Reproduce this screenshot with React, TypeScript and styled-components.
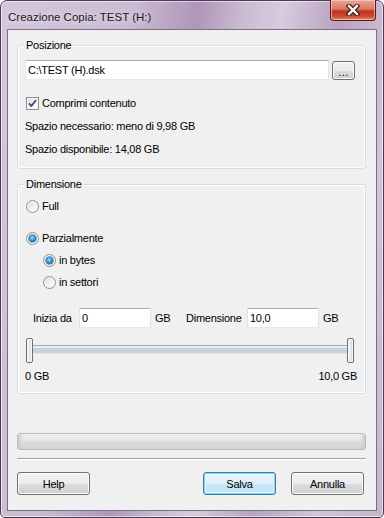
import React from "react";
import styled, { createGlobalStyle, css } from "styled-components";

const GlobalStyle = createGlobalStyle`
  html, body { margin: 0; padding: 0; background: #ffffff; }
  body {
    font-family: "Liberation Sans", Arial, sans-serif;
    font-size: 11px;
    letter-spacing: -0.25px;
    color: #000;
  }
  * { box-sizing: border-box; }
`;

const Window = styled.div`
  width: 384px;
  height: 518px;
  border: 1px solid #4b3d52;
  border-radius: 7px 7px 5px 5px;
  padding: 0 6px 6px 6px;
  display: flex;
  flex-direction: column;
  background: linear-gradient(
    100deg,
    #d4c7dc 0%,
    #cbbad3 28%,
    #b096b8 42%,
    #cbbbd2 52%,
    #d7cbde 60%,
    #b9a2c0 72%,
    #d2c4d9 86%,
    #c7b5ce 100%
  );
  box-shadow: inset 0 0 0 1px rgba(255, 255, 255, 0.55);
`;

const TitleBar = styled.div`
  height: 28px;
  flex: none;
  display: flex;
  align-items: flex-start;
  justify-content: space-between;
`;

const Title = styled.div`
  margin: 9px 0 0 1px;
  font-family: "Segoe UI", "Liberation Sans", Arial, sans-serif;
  font-size: 11.5px;
  letter-spacing: 0;
  line-height: 14px;
  color: #1a1a1a;
  text-shadow: 0 0 6px rgba(255, 255, 255, 0.9);
`;

const CloseButton = styled.div`
  width: 46px;
  height: 21px;
  margin: -1px 1px 0 0;
  border: 1px solid #5a1c16;
  border-top: none;
  border-radius: 0 0 4px 4px;
  display: flex;
  align-items: center;
  justify-content: center;
  background: linear-gradient(
    to bottom,
    #eaa797 0%,
    #d97a66 45%,
    #c4321b 55%,
    #c94831 80%,
    #e28a6c 100%
  );
  box-shadow: inset 0 0 0 1px rgba(255, 220, 210, 0.55);
`;

const Client = styled.div`
  flex: 1;
  background: #f0f0f0;
  border: 1px solid #7d6d85;
  display: flex;
  flex-direction: column;
  padding: 0 10px 0 9px;
`;

const Group = styled.div<{ $top: number; $pad: string }>`
  position: relative;
  margin-top: ${(p) => p.$top}px;
  border: 1px solid #d5dfe5;
  border-radius: 3px;
  box-shadow: inset 0 0 0 1px #ffffff;
  padding: ${(p) => p.$pad};
  display: flex;
  flex-direction: column;
`;

const Caption = styled.span`
  position: absolute;
  top: -7px;
  left: 6px;
  padding: 0 2px;
  line-height: 13px;
  background: #f0f0f0;
`;

const PathRow = styled.div`
  display: flex;
  align-items: center;
  gap: 3px;
  height: 20px;
`;

const TextField = styled.input<{ $w: number }>`
  width: ${(p) => p.$w}px;
  height: 20px;
  margin: 0;
  padding: 0 0 0 2px;
  border: 1px solid;
  border-color: #abadb3 #e2e3ea #e3e9ef #e2e3ea;
  background: #ffffff;
  font: inherit;
  letter-spacing: inherit;
  color: #000;
  outline: none;
`;

const buttonFace = css`
  border: 1px solid #707070;
  border-radius: 3px;
  background: linear-gradient(
    to bottom,
    #f2f2f2 0%,
    #ebebeb 50%,
    #dddddd 51%,
    #cfcfcf 100%
  );
  box-shadow: inset 0 0 0 1px #fbfbfb;
  font: inherit;
  color: #000;
  padding: 0;
  display: flex;
  align-items: center;
  justify-content: center;
`;

const BrowseButton = styled.div`
  ${buttonFace}
  width: 23px;
  height: 19px;
  line-height: 10px;
  padding-top: 3px;
  letter-spacing: 0.5px;
`;

const OptionRow = styled.div<{ $top: number; $indent?: number }>`
  display: flex;
  align-items: center;
  gap: 3px;
  height: 13px;
  margin-top: ${(p) => p.$top}px;
  margin-left: ${(p) => p.$indent ?? 0}px;
  line-height: 13px;
`;

const CheckBox = styled.span`
  width: 13px;
  height: 13px;
  flex: none;
  margin-left: 1px;
  border: 1px solid #8e8f8f;
  background: linear-gradient(135deg, #dcdcdc 0%, #f6f6f6 60%, #ffffff 100%);
  box-shadow: inset 0 0 0 1px #f4f4f4;
  display: flex;
  align-items: center;
  justify-content: center;
`;

const Radio = styled.span<{ $on?: boolean }>`
  width: 13px;
  height: 13px;
  flex: none;
  border-radius: 50%;
  border: 1px solid #8e8f8f;
  background: linear-gradient(135deg, #d9d9d9 0%, #f2f2f2 55%, #ffffff 100%);
  box-shadow: inset 0 0 0 1px #f7f7f7;
  display: flex;
  align-items: center;
  justify-content: center;
  &::after {
    content: "";
    display: ${(p) => (p.$on ? "block" : "none")};
    width: 7px;
    height: 7px;
    border-radius: 50%;
    background: radial-gradient(
      circle at 45% 40%,
      #9be3fb 0%,
      #2aa3e0 40%,
      #0f5f9e 80%,
      #0b4a80 100%
    );
    box-shadow: 0 0 0 0.5px #174d7b;
  }
`;

const InfoText = styled.div<{ $top: number }>`
  margin-top: ${(p) => p.$top}px;
  line-height: 13px;
`;

const FieldsRow = styled.div`
  margin-top: 19px;
  height: 20px;
  padding-left: 8px;
  display: grid;
  grid-template-columns: 46px 72px 35px 61px 72px auto;
  align-items: center;
`;

const Unit = styled.span`
  padding-left: 4px;
`;

const Slider = styled.div`
  position: relative;
  margin: 10px 0 0 1px;
  width: 328px;
  height: 25px;
`;

const Track = styled.div`
  margin: 7px 3px 0 3px;
  height: 9px;
  background: linear-gradient(
    to bottom,
    #a9a9a9 0px,
    #a9a9a9 1px,
    #eaeef2 1px,
    #eaeef2 3px,
    #c5d3df 3px,
    #c5d3df 8px,
    #e3e8ec 8px,
    #e3e8ec 9px
  );
`;

const Thumb = styled.div<{ $side: "left" | "right" }>`
  position: absolute;
  top: 0;
  ${(p) => p.$side}: 0;
  width: 7px;
  height: 25px;
  border: 1px solid #707070;
  border-radius: 2px;
  background: linear-gradient(to right, #f6f6f6 0%, #e9e9e9 50%, #d6d6d6 100%);
  box-shadow: inset 0 0 0 1px #fafafa;
`;

const ScaleRow = styled.div`
  margin: 7px -2px 0 0;
  line-height: 13px;
  display: flex;
  justify-content: space-between;
`;

const Progress = styled.div`
  margin-top: 39px;
  height: 17px;
  border: 1px solid #bcbcbc;
  border-radius: 3px;
  background: linear-gradient(
    to bottom,
    #f3f3f3 0%,
    #e4e4e4 45%,
    #dadada 55%,
    #d9d9d9 100%
  );
  box-shadow: inset 4px 0 4px -2px #c8c8c8, inset -4px 0 4px -2px #c8c8c8,
    inset 0 1px 0 #ffffff;
`;

const Separator = styled.div`
  margin-top: 8px;
  height: 1px;
  background: #a0a0a0;
  box-shadow: 0 1px 0 #ffffff;
`;

const ButtonBar = styled.div`
  margin-top: 13px;
  padding-right: 2px;
  display: flex;
  gap: 15px;
`;

const Button = styled.div<{ $default?: boolean; $push?: boolean }>`
  ${buttonFace}
  width: 73px;
  height: 23px;
  ${(p) => (p.$push ? "margin-left: auto;" : "")}
  ${(p) =>
    p.$default &&
    css`
      border-color: #3c7fb1;
      background: linear-gradient(
        to bottom,
        #eaf6fd 0%,
        #dcf0fb 50%,
        #c9e8f8 51%,
        #bfe2f4 100%
      );
      box-shadow: inset 0 0 0 1px #7fd2f7, inset 0 0 0 2px #e8f6fd;
    `}
`;

const CloseGlyph = () => (
  <svg width="14" height="12" viewBox="0 0 14 12">
    <path d="M3 2 L11 10 M11 2 L3 10" stroke="#3b1812" strokeWidth="4.6" strokeLinecap="square" />
    <path d="M3 2 L11 10 M11 2 L3 10" stroke="#ffffff" strokeWidth="2.4" strokeLinecap="square" />
  </svg>
);

const CheckMark = () => (
  <svg width="9" height="9" viewBox="0 0 9 9">
    <path d="M1 4.4 L3.4 7 L8 1.2" fill="none" stroke="#3b4f91" strokeWidth="1.9" strokeLinejoin="round" />
  </svg>
);

export default function App() {
  return (
    <>
      <GlobalStyle />
      <Window>
        <TitleBar>
          <Title>Creazione Copia: TEST (H:)</Title>
          <CloseButton>
            <CloseGlyph />
          </CloseButton>
        </TitleBar>
        <Client>
          <Group $top={15} $pad="14px 10px 12px 7px">
            <Caption>Posizione</Caption>
            <PathRow>
              <TextField $w={304} defaultValue="C:\TEST (H).dsk" />
              <BrowseButton>...</BrowseButton>
            </PathRow>
            <OptionRow $top={17}>
              <CheckBox>
                <CheckMark />
              </CheckBox>
              <span>Comprimi contenuto</span>
            </OptionRow>
            <InfoText $top={10}>Spazio necessario: meno di 9,98 GB</InfoText>
            <InfoText $top={10}>Spazio disponibile: 14,08 GB</InfoText>
          </Group>

          <Group $top={15} $pad="15px 10px 10px 7px">
            <Caption>Dimensione</Caption>
            <OptionRow $top={0} $indent={1}>
              <Radio />
              <span>Full</span>
            </OptionRow>
            <OptionRow $top={19} $indent={1}>
              <Radio $on />
              <span>Parzialmente</span>
            </OptionRow>
            <OptionRow $top={9} $indent={18}>
              <Radio $on />
              <span>in bytes</span>
            </OptionRow>
            <OptionRow $top={9} $indent={18}>
              <Radio />
              <span>in settori</span>
            </OptionRow>
            <FieldsRow>
              <span>Inizia da</span>
              <TextField $w={72} defaultValue="0" />
              <Unit>GB</Unit>
              <span>Dimensione</span>
              <TextField $w={72} defaultValue="10,0" />
              <Unit>GB</Unit>
            </FieldsRow>
            <Slider>
              <Track />
              <Thumb $side="left" />
              <Thumb $side="right" />
            </Slider>
            <ScaleRow>
              <span>0 GB</span>
              <span>10,0 GB</span>
            </ScaleRow>
          </Group>

          <Progress />
          <Separator />
          <ButtonBar>
            <Button>Help</Button>
            <Button $default $push>
              Salva
            </Button>
            <Button>Annulla</Button>
          </ButtonBar>
        </Client>
      </Window>
    </>
  );
}
